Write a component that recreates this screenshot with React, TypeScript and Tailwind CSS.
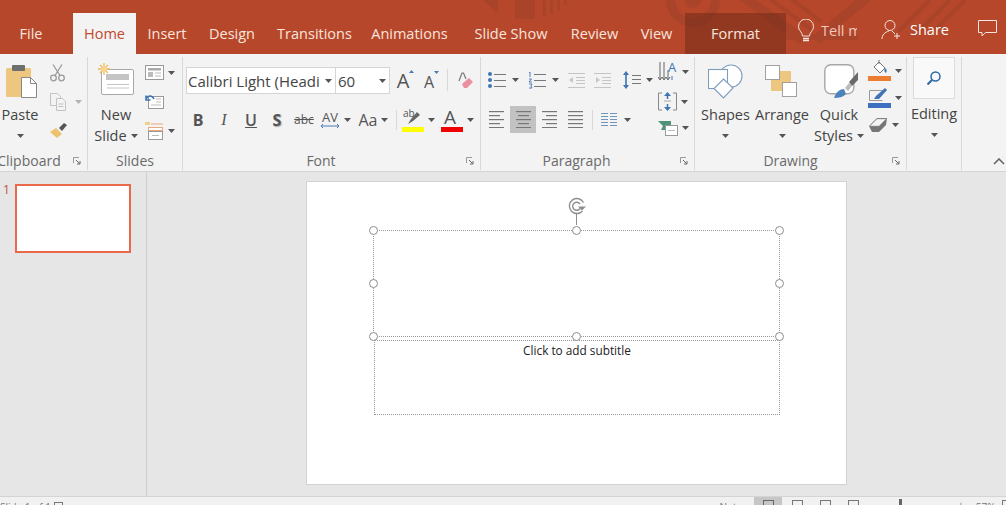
import React from "react"

const font = "font-['Open_Sans','Noto_Sans',sans-serif]"

const Caret = ({ className = "" }: { className?: string }) => (
  <svg width="7" height="4" viewBox="0 0 7 4" className={`shrink-0 ${className}`}>
    <path d="M0 0h7L3.5 4z" fill="#555" />
  </svg>
)

const Launcher = () => (
  <svg width="8" height="8" viewBox="0 0 8 8" className="absolute bottom-[5px] right-[6px]">
    <path d="M.5 6V.5H6" fill="none" stroke="#999" />
    <path d="M3 3l3.5 3.5M7 4v3H4" fill="none" stroke="#666" />
  </svg>
)

const Lines = ({ rows, x = 0, w = 16, color = "#777" }: { rows: number[]; x?: number; w?: number; color?: string }) => (
  <>
    {rows.map((y) => (
      <rect key={y} x={x} y={y} width={w} height="1" fill={color} />
    ))}
  </>
)

const Align = ({ kind }: { kind: "l" | "c" | "r" | "j" }) => {
  const rows = [0, 4, 8, 12, 16]
  const widths = kind === "j" ? [15, 15, 15, 15, 15] : [15, 11, 15, 11, 15]
  return (
    <svg width="15" height="17" viewBox="0 0 15 17">
      {rows.map((y, i) => {
        const x = kind === "c" ? (15 - widths[i]) / 2 : kind === "r" ? 15 - widths[i] : 0
        return <rect key={y} x={x} y={y} width={widths[i]} height="1.2" fill="#777" />
      })}
    </svg>
  )
}

const TopPattern = () => (
  <svg width="1006" height="54" viewBox="0 0 1006 54" className="absolute left-0 top-0">
    <g fill="#a9432a">
      <path d="M483 0h15v14zM515 0h20v19h-20z" />
      <path d="M543 0h3v17h-3zM550 0h3v14h-3zM557 0h3v10h-3zM564 0h3v5h-3z" />
      <circle cx="693" cy="0" r="27" />
    </g>
    <circle cx="693" cy="0" r="18" fill="#b7472a" />
    <circle cx="693" cy="0" r="8" fill="#a9432a" />
    <g fill="none" stroke="#a9432a">
      <path d="M742 -4L803 40" strokeWidth="10" />
      <path d="M766 -4L812 30M787 -4L822 22" strokeWidth="4" />
      <path d="M868 -4L816 40" strokeWidth="10" />
      <path d="M930 0L898 32M950 0L918 32M965 0L935 30" strokeWidth="4" />
    </g>
    <path d="M786 34h72v6h-72z" fill="#a9432a" />
  </svg>
)

const tabClass = "relative flex h-[41px] items-center pt-[1px] text-[14.5px] text-[#f8e5df]"

const TitleBar = () => (
  <div className="relative h-[54px] bg-[#b7472a]">
    <TopPattern />
    <div className="relative flex h-full items-end">
      <div className={`${tabClass} w-[73px] justify-center pr-[11px]`}>File</div>
      <div className={`${tabClass} w-[63px] justify-center bg-[#f3f3f3] !text-[#c2492c]`}>Home</div>
      <div className={`${tabClass} ml-[12px] w-[38px] justify-center`}>Insert</div>
      <div className={`${tabClass} ml-[22px] w-[48px] justify-center`}>Design</div>
      <div className={`${tabClass} ml-[22px] w-[73px] justify-center`}>Transitions</div>
      <div className={`${tabClass} ml-[22px] w-[73px] justify-center`}>Animations</div>
      <div className={`${tabClass} ml-[27px] w-[76px] justify-center`}>Slide Show</div>
      <div className={`${tabClass} ml-[22px] w-[47px] justify-center`}>Review</div>
      <div className={`${tabClass} ml-[22px] w-[33px] justify-center`}>View</div>
      <div className={`${tabClass} ml-[12px] w-[101px] justify-center bg-[#5c2412]/40`}>Format</div>
      <div className="flex h-[41px] items-center pb-[5px] text-[14.5px] text-[#f8e5df]">
        <svg width="18" height="24" viewBox="0 0 18 24" className="ml-[11px]" fill="none" stroke="#f8e5df">
          <path d="M5.5 17c0-4-4-5-4-9.500a7.500 7.500 0 0 1 15 0c0 4.500-4 5.500-4 9.500z" />
          <path d="M6 19.500h6M6 21.500h6" strokeWidth="1.500" />
        </svg>
        <div className="ml-[6px] w-[36px] overflow-hidden whitespace-nowrap text-[#eec9bd]">Tell me</div>
        <svg width="20" height="22" viewBox="0 0 20 22" className="ml-[24px] mb-[3px]" fill="none" stroke="#f8e5df">
          <circle cx="9" cy="6.500" r="5" />
          <path d="M1 20c0-4 3-7 7-8M11 12l3 3M16 14v6M13 17h6" />
        </svg>
        <div className="ml-[9px] mb-[3px] font-medium text-white">Share</div>
        <svg width="19" height="17" viewBox="0 0 19 17" className="ml-[29px] mb-[6px]" fill="none" stroke="#f8e5df">
          <path d="M.5.500h18v12H7.500L4 16v-3.500H.5z" />
        </svg>
      </div>
    </div>
  </div>
)

const Group = ({
  label,
  className,
  launcher,
  labelClass = "",
  children,
}: {
  label: string
  className: string
  launcher?: boolean
  labelClass?: string
  children: React.ReactNode
}) => (
  <section className={`relative mt-[3px] flex h-[113px] shrink-0 flex-col overflow-hidden border-r border-[#d8d8d8] ${className}`}>
    <div className="flex-1">{children}</div>
    <div className={`h-[18px] text-center text-[14px] leading-[18px] text-[#6a6a6a] ${labelClass}`}>{label}</div>
    {launcher && <Launcher />}
  </section>
)

const BigLabel = ({ children }: { children: React.ReactNode }) => (
  <div className="flex h-[21px] items-center justify-center gap-[4px] whitespace-nowrap text-[14.5px] leading-[21px] text-[#444]">
    {children}
  </div>
)

const ClipboardGroup = () => (
  <Group label="Clipboard" className="w-[88px]" launcher labelClass="-ml-[4px] w-[66px]">
    <div className="flex">
      <div className="w-[40px]">
        <div className="h-[47px] pl-[6px] pt-[7px]">
          <svg width="32" height="34" viewBox="0 0 32 34">
            <rect x="0" y="4" width="25" height="29" rx="1.500" fill="#edc67f" />
            <rect x="6" y="1" width="13" height="6" rx="1" fill="#6e6e6e" />
            <path d="M15.500 13.500h9l6 6v14h-15z" fill="#fff" stroke="#888" />
            <path d="M24.500 13.500v6h6" fill="none" stroke="#888" />
          </svg>
        </div>
        <BigLabel>Paste</BigLabel>
        <div className="flex h-[21px] items-center justify-center"><Caret /></div>
      </div>
      <div className="ml-[10px] flex flex-col pt-[7px]">
        <svg width="15" height="18" viewBox="0 0 15 18" fill="none" stroke="#9a9a9a" strokeWidth="1.300">
          <circle cx="3.500" cy="14" r="2.800" />
          <circle cx="11.500" cy="14" r="2.800" />
          <path d="M5 11.500L12 .500M10 11.500L3 .500" />
        </svg>
        <div className="mt-[11px] flex items-center gap-[8px]">
          <svg width="17" height="18" viewBox="0 0 17 18" fill="#f3f3f3" stroke="#c2c2c2">
            <path d="M.5.500h7l3 3v9h-10z" />
            <path d="M6.500 5.500h6l3 3v9h-9z" />
            <path d="M8.500 11h5M8.500 13.500h5" />
          </svg>
          <Caret className="opacity-40" />
        </div>
        <svg width="17" height="16" viewBox="0 0 17 16" className="mt-[12px]">
          <path d="M0 9l6-4 6 6-5 4z" fill="#ecc26f" />
          <path d="M9 5l5-5 3 2-5 6z" fill="#555" />
        </svg>
      </div>
    </div>
  </Group>
)

const SlidesGroup = () => (
  <Group label="Slides" className="w-[95px]">
    <div className="flex">
      <div className="ml-[6px] w-[44px]">
        <div className="h-[47px] pl-[4px] pt-[6px]">
          <svg width="36" height="32" viewBox="0 0 36 32">
            <rect x="3.500" y="6.500" width="32" height="25" rx="1.500" fill="#fff" stroke="#a8a8a8" />
            <rect x="8" y="11" width="23" height="6" fill="#c4c4c4" />
            <path d="M9 21.500h22M9 25h22" stroke="#c4c4c4" />
            <g stroke="#eebb5a" strokeWidth="1.300">
              <path d="M6 0v12M0 6h12M2 2l8 8M10 2l-8 8" />
            </g>
            <circle cx="6" cy="6" r="3" fill="#f6d68f" />
          </svg>
        </div>
        <BigLabel>New</BigLabel>
        <BigLabel>Slide <Caret /></BigLabel>
      </div>
      <div className="ml-[7px] flex flex-col pt-[8px]">
        <div className="flex items-center gap-[4px]">
          <svg width="19" height="15" viewBox="0 0 19 15">
            <rect x=".5" y=".5" width="18" height="14" fill="#fff" stroke="#999" />
            <rect x="3" y="3" width="13" height="2.500" fill="#aaa" />
            <rect x="3" y="7" width="5" height="5" fill="#bbb" />
            <path d="M10 8h6M10 11h6" stroke="#bbb" />
          </svg>
          <Caret />
        </div>
        <svg width="19" height="15" viewBox="0 0 19 15" className="mt-[14px]">
          <rect x="3.500" y="2.500" width="15" height="12" fill="#fff" stroke="#999" />
          <path d="M11 5h5M11 8h5M6 11h10" stroke="#bbb" />
          <path d="M1 5c2-4 6-4 8 0M1 1.500V6h4.500" fill="none" stroke="#3f74b5" strokeWidth="1.600" />
        </svg>
        <div className="mt-[13px] flex items-center gap-[4px]">
          <svg width="19" height="18" viewBox="0 0 19 18">
            <rect x="0" y="0" width="5" height="3" fill="#f0cf8e" />
            <path d="M6 2h12" stroke="#eda77a" />
            <rect x="3.500" y="5.500" width="14" height="3" fill="#fff" stroke="#eda77a" />
            <rect x="3.500" y="9.500" width="14" height="8" fill="#fff" stroke="#999" />
            <path d="M7 13.500h7" stroke="#bbb" />
          </svg>
          <Caret />
        </div>
      </div>
    </div>
  </Group>
)

const fontBtn = "flex items-center justify-center text-[#555]"

const FontGroup = () => (
  <Group label="Font" className="w-[298px]" launcher labelClass="pr-[21px]">
    <div className="flex h-[27px] ml-[3px] mt-[10px]">
      <div className="flex w-[150px] items-center justify-between border border-[#d5d5d5] bg-white pl-[1px] pr-[3px] pt-[1px]">
        <span className="w-[135px] overflow-hidden whitespace-nowrap text-[15px] text-[#444]">Calibri Light (Headi</span>
        <Caret />
      </div>
      <div className="flex w-[54px] items-center justify-between border border-l-0 border-[#d5d5d5] bg-white pl-[2px] pr-[3px] pt-[1px]">
        <span className="text-[15px] text-[#444]">60</span>
        <Caret />
      </div>
      <div className={`${fontBtn} relative ml-[5px] w-[16px] pt-[1px] text-[20px]`}>
        A
        <svg width="5" height="3" viewBox="0 0 5 3" className="absolute right-[-3px] top-[3px]"><path d="M0 3l2.500-3L5 3z" fill="#4a7ab8" /></svg>
      </div>
      <div className={`${fontBtn} relative ml-[11px] w-[14px] pt-[2px] text-[16px]`}>
        A
        <svg width="5" height="3" viewBox="0 0 5 3" className="absolute right-[-3px] top-[4px]"><path d="M0 0h5L2.500 3z" fill="#4a7ab8" /></svg>
      </div>
      <div className="ml-[11px] mt-[2px] h-[22px] w-px bg-[#d8d8d8]" />
      <svg width="15" height="16" viewBox="0 0 15 16" className="ml-[10px] mt-[5px]">
        <path d="M1 9L4 1h1.500L8 7" fill="none" stroke="#777" strokeWidth="1.200" />
        <path d="M4 12l7-6 4 4-6 6H6z" fill="#ec8fa0" />
      </svg>
    </div>
    <div className="ml-[5px] mt-[13px] flex h-[26px] items-center text-[16px]">
      <div className={`${fontBtn} w-[20px] font-bold`}>B</div>
      <div className={`${fontBtn} ml-[6px] w-[20px] font-['Liberation_Serif',serif] italic`}>I</div>
      <div className={`${fontBtn} ml-[7px] w-[20px] font-semibold underline`}>U</div>
      <div className={`${fontBtn} ml-[6px] w-[20px] font-bold [text-shadow:1px_1px_1px_#aaa]`}>S</div>
      <div className={`${fontBtn} ml-[7px] w-[20px] text-[12px] line-through`}>abc</div>
      <div className={`${fontBtn} relative ml-[6px] w-[20px] pb-[4px] text-[13px]`}>
        AV
        <svg width="18" height="4" viewBox="0 0 18 4" className="absolute bottom-[4px] left-[1px]"><path d="M0 2h18M0 2l2-2M0 2l2 2M18 2l-2-2M18 2l-2 2" stroke="#4a7ab8" fill="none" /></svg>
      </div>
      <Caret className="ml-[4px]" />
      <div className={`${fontBtn} ml-[5px] w-[24px] text-[16px]`}>Aa</div>
      <Caret className="ml-[1px]" />
      <div className="ml-[8px] h-[20px] w-px bg-[#d8d8d8]" />
      <div className="relative ml-[5px] h-[24px] w-[22px]">
        <span className="absolute left-[1px] top-[-2px] text-[10px] text-[#555]">ab</span>
        <svg width="14" height="14" viewBox="0 0 14 14" className="absolute left-[6px] top-[3px]">
          <path d="M0 13l3-5 6-7 3 3-7 6z" fill="#666" />
        </svg>
        <div className="absolute bottom-0 h-[5px] w-[22px] bg-[#ffff00]" />
      </div>
      <Caret className="ml-[4px]" />
      <div className="relative ml-[6px] h-[24px] w-[22px]">
        <span className="absolute left-[3px] top-[-5px] text-[19px] text-[#555]">A</span>
        <div className="absolute bottom-0 h-[5px] w-[22px] bg-[#f00000]" />
      </div>
      <Caret className="ml-[4px]" />
    </div>
  </Group>
)

const ParagraphGroup = () => (
  <Group label="Paragraph" className="w-[214px]" launcher labelClass="pr-[22px]">
    <div className="flex">
      <div className="w-[177px]">
        <div className="mt-[14px] flex h-[18px] items-center pl-[7px]">
          <svg width="18" height="16" viewBox="0 0 18 16">
            <circle cx="2" cy="2" r="2" fill="#3f74b5" />
            <circle cx="2" cy="8" r="2" fill="#3f74b5" />
            <circle cx="2" cy="14" r="2" fill="#3f74b5" />
            <Lines rows={[2, 8, 14]} x={6} w={12} />
          </svg>
          <Caret className="ml-[6px]" />
          <svg width="18" height="17" viewBox="0 0 18 17" className="ml-[9px]">
            <path d="M1 1l1-1v5M1 7h2.500L1 10h3M1 12h3l-1 2 1 2H1" fill="none" stroke="#3f74b5" strokeWidth=".9" />
            <Lines rows={[2, 8, 14]} x={6} w={12} />
          </svg>
          <Caret className="ml-[6px]" />
          <svg width="17" height="15" viewBox="0 0 17 15" className="ml-[9px] opacity-50">
            <Lines rows={[0, 14]} w={17} color="#999" />
            <Lines rows={[4, 7, 10]} x={8} w={9} color="#999" />
            <path d="M1 7l4-3v6z" fill="#8aa0ba" />
          </svg>
          <svg width="17" height="15" viewBox="0 0 17 15" className="ml-[9px] opacity-50">
            <Lines rows={[0, 14]} w={17} color="#999" />
            <Lines rows={[4, 7, 10]} x={8} w={9} color="#999" />
            <path d="M6 7L2 4v6z" fill="#8aa0ba" />
          </svg>
          <svg width="18" height="18" viewBox="0 0 18 18" className="ml-[12px]">
            <path d="M3 2v14" stroke="#3f74b5" strokeWidth="1.600" />
            <path d="M0 4l3-4 3 4zM0 14l3 4 3-4z" fill="#3f74b5" />
            <Lines rows={[4, 8, 12]} x={9} w={9} />
          </svg>
          <Caret className="ml-[5px]" />
        </div>
        <div className="mt-[17px] flex h-[27px] items-center pl-[8px]">
          <Align kind="l" />
          <div className="ml-[6px] flex h-[27px] w-[26px] items-center justify-center bg-[#c2c2c2]"><Align kind="c" /></div>
          <div className="ml-[6px]"><Align kind="r" /></div>
          <div className="ml-[11px]"><Align kind="j" /></div>
          <div className="ml-[9px] h-[20px] w-px bg-[#d8d8d8]" />
          <svg width="16" height="16" viewBox="0 0 16 16" className="ml-[8px]">
            <Lines rows={[1, 4, 7, 10, 13]} w={7} color="#6f95bd" />
            <Lines rows={[1, 4, 7, 10, 13]} x={9} w={7} color="#6f95bd" />
          </svg>
          <Caret className="ml-[7px]" />
        </div>
      </div>
      <div className="flex flex-col pt-[5px]">
        <div className="flex items-center gap-[4px]">
          <div className="relative h-[20px] w-[20px]">
            <svg width="20" height="20" viewBox="0 0 20 20" className="absolute left-0 top-0">
              <path d="M2 0v17M6 0v17M10 8v9" stroke="#666" />
              <path d="M0 15l2 3 2-3M4 15l2 3 2-3M8 15l2 3 2-3" fill="none" stroke="#666" />
              <path d="M14 18v-4" stroke="#3f74b5" />
            </svg>
            <span className="absolute left-[10px] top-[-4px] text-[13px] text-[#3f74b5]">A</span>
          </div>
          <Caret />
        </div>
        <div className="mt-[10px] flex items-center gap-[4px]">
          <svg width="19" height="19" viewBox="0 0 19 19">
            <path d="M4 1H.5v17H4M15 1h3.500v17H15" fill="none" stroke="#888" />
            <path d="M9.500 1v6M9.500 12v6" stroke="#3f74b5" strokeWidth="1.500" />
            <path d="M6 4l3.500-4L13 4zM6 15l3.500 4L13 15z" fill="#3f74b5" />
            <path d="M6 9h7" stroke="#aaa" />
          </svg>
          <Caret />
        </div>
        <div className="mt-[9px] flex items-center gap-[4px]">
          <svg width="20" height="16" viewBox="0 0 20 16">
            <path d="M0 1h13v9H3l2-4z" fill="#4c9378" />
            <rect x="7.500" y="5.500" width="12" height="10" fill="#fff" stroke="#999" />
            <path d="M10 10.500h7" stroke="#bbb" />
          </svg>
          <Caret />
        </div>
      </div>
    </div>
  </Group>
)

const DrawingGroup = () => (
  <Group label="Drawing" className="w-[212px]" launcher labelClass="pr-[20px]">
    <div className="flex">
      <div className="ml-[5px] w-[51px]">
        <div className="h-[47px] pl-[8px] pt-[7px]">
          <svg width="35" height="35" viewBox="0 0 35 35" fill="#fff" stroke="#7e9dbd" strokeWidth="1.100">
            <circle cx="23" cy="12" r="11" />
            <rect x=".5" y="5.500" width="19" height="19" />
            <path d="M15.500 15L25 24l-9.500 10L6 24.500z" />
          </svg>
        </div>
        <BigLabel>Shapes</BigLabel>
        <div className="flex h-[21px] items-center justify-center"><Caret /></div>
      </div>
      <div className="ml-[3px] w-[56px]">
        <div className="h-[47px] pl-[11px] pt-[8px]">
          <svg width="32" height="32" viewBox="0 0 32 32">
            <rect x="6" y="6" width="20" height="20" fill="#edc67f" />
            <rect x=".5" y=".5" width="14" height="14" fill="#fff" stroke="#a0a0a0" />
            <rect x="17.500" y="17.500" width="14" height="14" fill="#fff" stroke="#a0a0a0" />
          </svg>
        </div>
        <BigLabel>Arrange</BigLabel>
        <div className="flex h-[21px] items-center justify-center"><Caret /></div>
      </div>
      <div className="ml-[3px] w-[52px]">
        <div className="h-[47px] pl-[11px] pt-[7px]">
          <svg width="36" height="36" viewBox="0 0 36 36">
            <rect x=".8" y=".8" width="29" height="29" rx="6" fill="#fff" stroke="#a8a8a8" strokeWidth="1.400" />
            <path d="M10 34c2-6 6-9 10-9l2 5c-3 3-7 4-12 4z" fill="#4d82bd" />
            <path d="M21 24l4-5 3 3-4 5z" fill="#bbb" />
            <path d="M25 18l9-10v8l-6 6z" fill="#6a6a6a" />
          </svg>
        </div>
        <BigLabel>Quick</BigLabel>
        <BigLabel>Styles <Caret /></BigLabel>
      </div>
      <div className="ml-[3px] flex flex-col pt-[3px]">
        <div className="flex items-center gap-[4px]">
          <svg width="23" height="21" viewBox="0 0 23 21">
            <path d="M11 2l6 6-5 5-6-6z" fill="#fff" stroke="#777" />
            <path d="M11 0v4" stroke="#777" />
            <path d="M17 8c2 1 2 3 1 5-2-1-2-3-1-5z" fill="#3f74b5" />
            <rect y="16" width="23" height="5" fill="#ed7d31" />
          </svg>
          <Caret />
        </div>
        <div className="mt-[7px] flex items-center gap-[4px]">
          <svg width="23" height="20" viewBox="0 0 23 20">
            <path d="M14 2.500H1.500v10h13" fill="none" stroke="#999" />
            <path d="M6 11l2-3 9-8 2 2-8 9z" fill="#3f74b5" />
            <rect y="15" width="23" height="5" fill="#3f6fc0" />
          </svg>
          <Caret />
        </div>
        <div className="ml-[1px] mt-[9px] flex items-center gap-[4px]">
          <svg width="19" height="16" viewBox="0 0 19 16">
            <path d="M0 9L8 1h10l-1 7-7 7H3z" fill="#777" />
            <path d="M1 9l7-7h9L10 9z" fill="#f4f4f4" stroke="#aaa" strokeWidth=".5" />
          </svg>
          <Caret />
        </div>
      </div>
    </div>
  </Group>
)

const EditingGroup = () => (
  <Group label="" className="w-[55px]">
    <div className="ml-[6px] flex h-[42px] w-[42px] items-center justify-center border border-[#dcdcdc] bg-[#f9f9f9]">
      <svg width="14" height="14" viewBox="0 0 14 14" fill="none" stroke="#2f6aa8" strokeWidth="1.500">
        <circle cx="8.500" cy="5.500" r="4.500" />
        <path d="M5 9l-4.500 4.500" strokeWidth="2" />
      </svg>
    </div>
    <div className="mt-[4px]">
      <BigLabel>Editing</BigLabel>
    </div>
    <div className="flex h-[21px] items-center justify-center"><Caret /></div>
  </Group>
)

const Ribbon = () => (
  <div className="relative flex h-[118px] border-b border-[#d4d4d4] bg-[#f3f3f3]">
    <ClipboardGroup />
    <SlidesGroup />
    <FontGroup />
    <ParagraphGroup />
    <DrawingGroup />
    <EditingGroup />
    <svg width="12" height="7" viewBox="0 0 12 7" className="absolute bottom-[6px] right-[1px]">
      <path d="M1 6l5-5 5 5" fill="none" stroke="#666" strokeWidth="1.600" />
    </svg>
  </div>
)

const Handle = ({ className }: { className: string }) => (
  <div className={`absolute h-[9px] w-[9px] rounded-full border-[1.5px] border-[#8e8e8e] bg-white ${className}`} />
)

const Slide = () => (
  <div className="relative h-[304px] w-[541px] border border-[#d2d2d2] bg-white">
    <svg width="20" height="28" viewBox="0 0 20 28" className="absolute left-[261px] top-[15px]" fill="none" stroke="#8e8e8e">
      <path d="M15.500 5.500A7.500 7.500 0 1 0 14.500 14" strokeWidth="1.400" />
      <path d="M12 7A4 4 0 1 0 12 11.500" strokeWidth="1.400" />
      <path d="M10 9.500h8l-4 4z" fill="#8e8e8e" stroke="none" />
      <path d="M8.500 17v11" />
    </svg>
    <div className="absolute left-[67px] top-[158px] h-[75px] w-[406px] border border-dotted border-[#999] text-center">
      <p className="pt-[1px] text-[11.8px] leading-[16px] text-[#222]">Click to add subtitle</p>
    </div>
    <div className="absolute left-[66px] top-[48px] h-[107px] w-[407px] border border-dotted border-[#999]">
      <Handle className="left-[-5px] top-[-5px]" />
      <Handle className="left-[198px] top-[-5px]" />
      <Handle className="right-[-5px] top-[-5px]" />
      <Handle className="left-[-5px] top-[48px]" />
      <Handle className="right-[-5px] top-[48px]" />
      <Handle className="bottom-[-5px] left-[-5px]" />
      <Handle className="bottom-[-5px] left-[198px]" />
      <Handle className="bottom-[-5px] right-[-5px]" />
    </div>
  </div>
)

const Main = () => (
  <div className="flex h-[325px] border-b border-[#d4d4d4] bg-[#e6e6e6]">
    <div className="flex w-[147px] shrink-0 items-start border-r border-[#cfcfcf] pl-[3px] pt-[11px]">
      <span className="w-[12px] text-[12px] leading-[14px] text-[#c0533d]">1</span>
      <div className="mt-[1px] h-[69px] w-[116px] border-2 border-[#e9694a] bg-white" />
    </div>
    <div className="pl-[159px] pt-[9px]">
      <Slide />
    </div>
  </div>
)

const StatusBar = () => (
  <div className="flex h-[8px] items-start overflow-hidden bg-[#f1f1f1] text-[10px] leading-[12px] text-[#777] *:shrink-0">
    <span className="w-[54px] whitespace-nowrap pt-[4px]">Slide 1 of 1</span>
    <svg width="11" height="8" viewBox="0 0 11 8" className="mt-[5px]"><rect x=".5" y=".5" width="8" height="9" fill="none" stroke="#777" /></svg>
    <span className="ml-[642px] w-[47px] whitespace-nowrap pt-[4px]">▲ Notes</span>
    <div className="flex h-[8px] w-[28px] justify-center bg-[#c6c6c6] pt-[3px]"><div className="h-[10px] w-[11px] border border-[#666]" /></div>
    <div className="ml-[10px] mt-[3px] h-[10px] w-[11px] border border-[#777]" />
    <div className="ml-[17px] mt-[3px] h-[10px] w-[11px] border border-[#777]" />
    <div className="ml-[17px] mt-[3px] h-[10px] w-[11px] border border-[#777]" />
    <div className="ml-[40px] mt-[2px] h-[10px] w-[3px] bg-[#666]" />
    <span className="ml-[56px] pt-[2px]">+</span>
    <span className="ml-[12px] pt-[4px]">57%</span>
    <div className="ml-[7px] mt-[3px] h-[10px] w-[10px] border border-[#777]" />
  </div>
)

export default function App() {
  return (
    <div className={`h-[505px] w-[1006px] overflow-hidden bg-[#e6e6e6] ${font}`}>
      <TitleBar />
      <Ribbon />
      <Main />
      <StatusBar />
    </div>
  )
}
